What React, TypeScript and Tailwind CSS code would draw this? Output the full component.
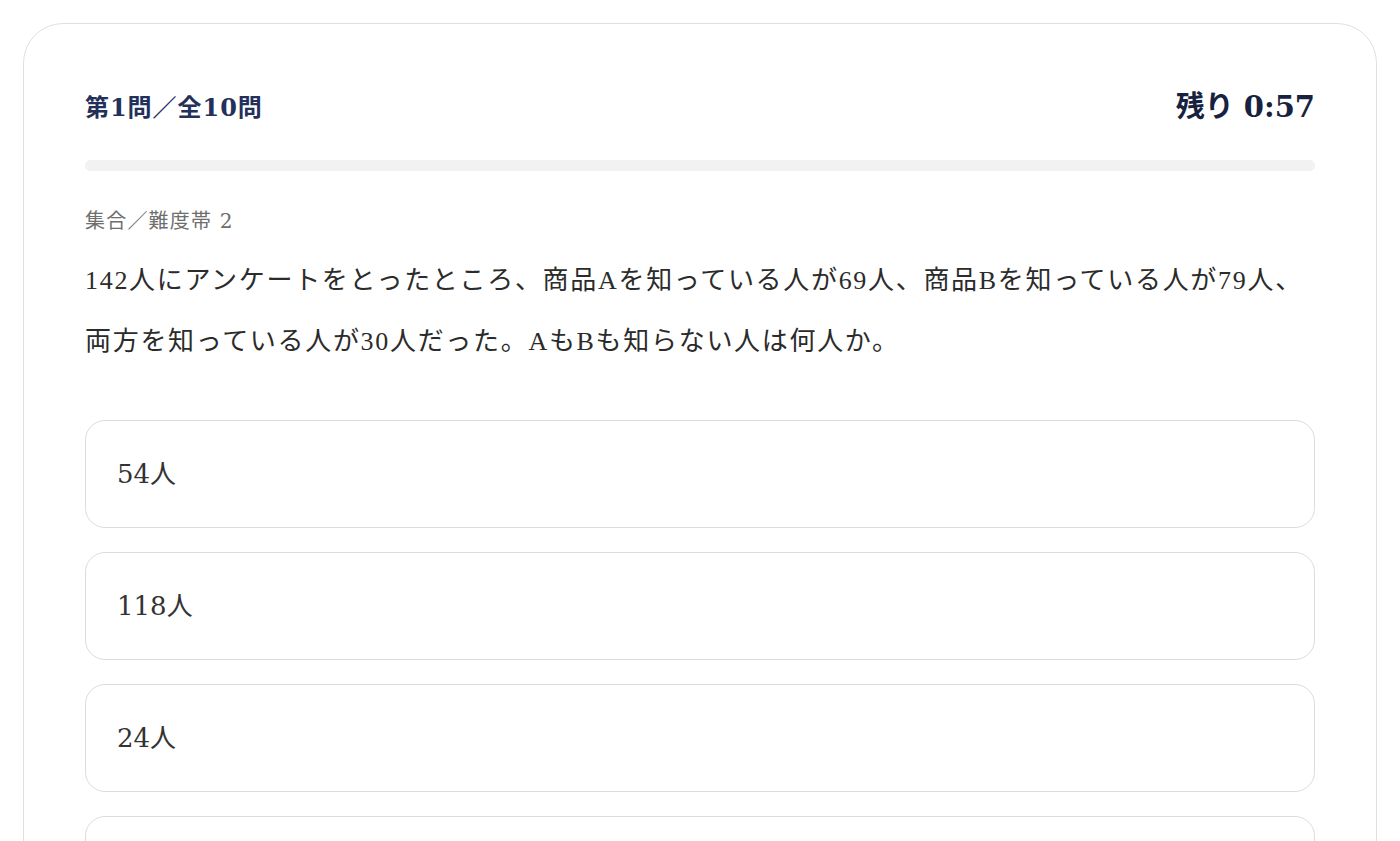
const options = ["54人", "118人", "24人", ""];

const serifJp = '"Liberation Serif", "Noto Sans CJK JP", serif';
const wideJp = '"DejaVu Serif", "Noto Sans CJK JP", serif';

export default function App() {
  return (
    <div className="min-h-screen bg-white p-[23px]" style={{ fontFamily: serifJp }}>
      <div className="rounded-[40px] border border-[#e0e0e0] bg-white px-[61px] pt-[64px] pb-16">
        {/* Header */}
        <div className="flex h-[40px] items-center justify-between" style={{ fontFamily: wideJp }}>
          <div className="text-[24px] font-bold tracking-[0.04em] text-[#22305a]">第1問／全10問</div>
          <div className="text-[29px] font-bold text-[#172240]">残り 0:57</div>
        </div>

        {/* Progress */}
        <div className="mt-[32px] h-[11px] w-full rounded-full bg-[#f2f2f2]">
          <div className="h-full w-0 rounded-full bg-[#22305a]" />
        </div>

        <div
          className="mt-[35px] text-[20px] leading-[30px] tracking-[0.06em] text-[#6e6e6e]"
          style={{ fontFamily: wideJp }}
        >
          集合／難度帯 2
        </div>

        <p className="mt-[14px] text-[26px] leading-[61px] tracking-[0.065em] text-[#2b2b2b]">
          142人にアンケートをとったところ、商品Aを知っている人が69人、商品Bを知っている人が79人、両方を知っている人が30人だった。AもBも知らない人は何人か。
        </p>

        <div className="mt-[48px] flex flex-col gap-6">
          {options.map((o, i) => (
            <button
              key={i}
              className="flex h-[108px] w-full items-center rounded-[20px] border border-[#dcdcdc] bg-white px-[31px] text-left text-[26px] text-[#333333]"
              style={{ fontFamily: wideJp }}
            >
              {o}
            </button>
          ))}
        </div>
      </div>
    </div>
  );
}
